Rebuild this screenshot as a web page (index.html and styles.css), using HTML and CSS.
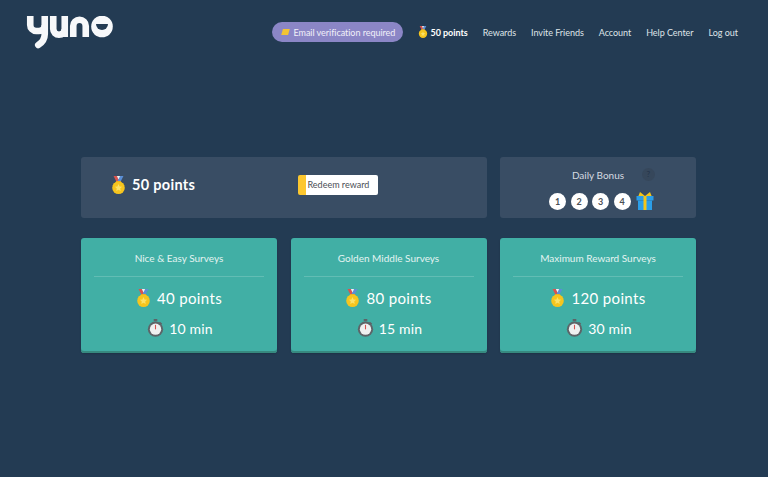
FILE: index.html
```html
<!DOCTYPE html>
<html lang="en">
<head>
<meta charset="utf-8">
<title>Yuno</title>
<link rel="stylesheet" href="styles.css">
</head>
<body>
<svg class="defs" width="0" height="0" aria-hidden="true">
  <symbol id="medal" viewBox="0 0 16 20">
    <path d="M2.500 0h4l3 7H6z" fill="#d9534f"/>
    <path d="M13.500 0h-4l-3 7h3.500z" fill="#5b8fd6"/>
    <path d="M6.200 0h3.600L8 4z" fill="#eef2f5"/>
    <path d="M1 11C3 9.500 4.500 8 5.500 5.500h5C11.500 8 13 9.500 15 11z" fill="#e8a820"/>
    <circle cx="8" cy="13" r="7" fill="#f6c51e"/>
    <path d="M8 9l1.200 2.700 2.800.3-2.100 1.900.6 2.800L8 15.300l-2.500 1.400.6-2.800L4 12l2.800-.3z" fill="#fbe268"/>
  </symbol>
  <symbol id="watch" viewBox="0 0 18 20">
    <rect x="7" y="0" width="4" height="2.500" fill="#5d6468"/>
    <path d="M14 3l2.500 2.200-1.300 1.300-2.400-2.200z" fill="#5d6468"/>
    <circle cx="9" cy="11.300" r="8.500" fill="#5d6468"/>
    <circle cx="9" cy="11.300" r="6.300" fill="#eef0f0"/>
    <path d="M9 6.500v5" stroke="#d9534f" stroke-width="1.200"/>
  </symbol>
</svg>

<header class="topbar">
  <svg class="logo" viewBox="0 0 88 33" role="img" aria-label="yuno">
    <g fill="none" stroke="#f7f8fa" stroke-width="6.600" stroke-linejoin="round">
      <path d="M4.250 0v9a6 6 0 0 0 6 6h2.500a6 6 0 0 0 6-6"/>
      <path d="M18.750 0v18c0 5-2.500 8.500-6.500 11" stroke-linecap="round"/>
      <path d="M27.250 0v13a5.750 5.750 0 0 0 11.500 0v-13"/>
      <path d="M38.750 13v8"/>
      <path d="M47.250 21v-11a6.250 6.250 0 0 1 12.500 0v11"/>
    </g>
    <circle cx="76" cy="10.500" r="10.800" fill="#f7f8fa"/>
    <path d="M70 8h12a6 6 0 0 1-12 0z" fill="#233b53"/>
  </svg>
  <nav class="nav">
    <a class="pill"><svg class="pill-icon" viewBox="0 0 10 7"><path d="M2 0h8L8 7H0z" fill="#f3c433"/></svg>Email verification required</a>
    <a class="nav-points"><svg class="medal-sm"><use href="#medal"/></svg>50 points</a>
    <a>Rewards</a>
    <a>Invite Friends</a>
    <a>Account</a>
    <a>Help Center</a>
    <a>Log out</a>
  </nav>
</header>

<main class="board">
  <section class="panel balance">
    <div class="balance-points"><svg class="medal-lg"><use href="#medal"/></svg>50 points</div>
    <button class="redeem">Redeem reward</button>
  </section>
  <section class="panel bonus">
    <div class="bonus-title">Daily Bonus<span class="help">?</span></div>
    <div class="days">
      <span class="day">1</span><span class="day">2</span><span class="day">3</span><span class="day">4</span>
      <svg class="gift" viewBox="0 0 18 18">
        <path d="M4 0l5 4 5-4 2 5H2z" fill="#f5c518"/>
        <rect x="0.500" y="4" width="17" height="4.500" fill="#2b9ee8"/>
        <rect x="2" y="8.500" width="14" height="9.500" fill="#2b9ee8"/>
        <rect x="7.500" y="4" width="3" height="14" fill="#f5c518"/>
      </svg>
    </div>
  </section>

  <article class="card">
    <h2>Nice &amp; Easy Surveys</h2>
    <p class="reward"><svg class="medal-lg"><use href="#medal"/></svg>40 points</p>
    <p class="time"><svg class="watch"><use href="#watch"/></svg>10 min</p>
  </article>
  <article class="card">
    <h2>Golden Middle Surveys</h2>
    <p class="reward"><svg class="medal-lg"><use href="#medal"/></svg>80 points</p>
    <p class="time"><svg class="watch"><use href="#watch"/></svg>15 min</p>
  </article>
  <article class="card">
    <h2>Maximum Reward Surveys</h2>
    <p class="reward"><svg class="medal-lg"><use href="#medal"/></svg>120 points</p>
    <p class="time"><svg class="watch"><use href="#watch"/></svg>30 min</p>
  </article>
</main>
</body>
</html>
```
FILE: styles.css
```css
* { box-sizing: border-box; }
html, body { height: 100%; }
body {
  margin: 0;
  overflow: hidden;
  background: #233b53;
  color: #fff;
  font-family: "Lato", "Liberation Sans", sans-serif;
}
.defs { display: block; height: 0; }

.topbar {
  display: flex;
  justify-content: space-between;
  align-items: flex-start;
  padding: 16px 30px 0 26px;
  height: 157px;
}
.logo { width: 88px; height: 33px; display: block; }
.nav {
  display: flex;
  align-items: center;
  gap: 15px;
  height: 20px;
  margin-top: 6px;
  font-size: 9px;
  letter-spacing: -0.04px;
  white-space: nowrap;
  color: #dfe4e8;
}
.pill {
  display: flex;
  align-items: center;
  width: 131px;
  height: 20px;
  padding-left: 9px;
  border-radius: 10px;
  background: #8b86c6;
  color: #f1f0f9;
}
.pill-icon { width: 9px; height: 6px; margin-right: 4px; }
.nav-points {
  display: flex;
  align-items: center;
  font-weight: 700;
  color: #fff;
}
.medal-sm { width: 10px; height: 12px; margin-right: 3px; }

.board {
  display: grid;
  grid-template-columns: repeat(3, 196px);
  column-gap: 13.500px;
  row-gap: 20px;
  grid-template-rows: 61px 115px;
  margin-left: 81px;
}
.panel {
  background: #394d64;
  border-radius: 3px;
}
.balance {
  grid-column: span 2;
  display: flex;
  align-items: center;
  padding-left: 30px;
  padding-right: 109px;
  justify-content: space-between;
}
.balance-points {
  display: flex;
  align-items: center;
  font-size: 14.500px;
  font-weight: 700;
  letter-spacing: 0.3px;
  margin-top: -6px;
}
.medal-lg { width: 15px; height: 18px; margin-right: 6px; }
.redeem {
  width: 80px;
  height: 20px;
  margin-top: -6px;
  padding: 0 0 0 2px;
  border: 0;
  border-left: 8px solid #fcc72f;
  border-radius: 2px;
  background: #fff;
  color: #4b4f55;
  font: 9px "Lato", "Liberation Sans", sans-serif;
  white-space: nowrap;
  text-align: left;
}

.bonus {
  display: flex;
  flex-direction: column;
  align-items: center;
  padding-top: 12px;
}
.bonus-title {
  position: relative;
  font-size: 10px;
  line-height: 12px;
  color: #d5dbe1;
}
.help {
  position: absolute;
  left: 70px;
  top: -1px;
  width: 13px;
  height: 13px;
  border-radius: 50%;
  background: #36475b;
  color: #24344a;
  font-size: 8px;
  line-height: 13px;
  text-align: center;
}
.days {
  display: flex;
  align-items: center;
  gap: 4.500px;
  margin-top: 11px;
  margin-left: 7px;
}
.day {
  width: 17px;
  height: 17px;
  border-radius: 50%;
  background: #fff;
  color: #4a4f55;
  font-size: 9px;
  font-weight: 700;
  line-height: 17px;
  text-align: center;
}
.gift { width: 18px; height: 18px; margin-left: 1px; }

.card {
  display: flex;
  flex-direction: column;
  align-items: center;
  padding: 0 13px;
  background: #41afa5;
  border-radius: 3px;
  box-shadow: inset 0 -2px 0 #37897f, 0 1px 2px rgba(0, 0, 0, 0.15);
}
.card h2 {
  align-self: stretch;
  margin: 0;
  height: 39px;
  padding-top: 14px;
  border-bottom: 1px solid #62bdb4;
  font-size: 10px;
  line-height: 12px;
  font-weight: 400;
  text-align: center;
  color: #e4f4f2;
}
.reward, .time {
  display: flex;
  align-items: center;
  margin: 0;
}
.reward { margin-top: 11px; height: 20px; font-size: 15px; letter-spacing: 0.35px; }
.time { margin-top: 10px; margin-left: 2px; height: 20px; font-size: 14px; letter-spacing: 0.2px; }
.watch { width: 17px; height: 18px; margin-right: 5px; }
```
